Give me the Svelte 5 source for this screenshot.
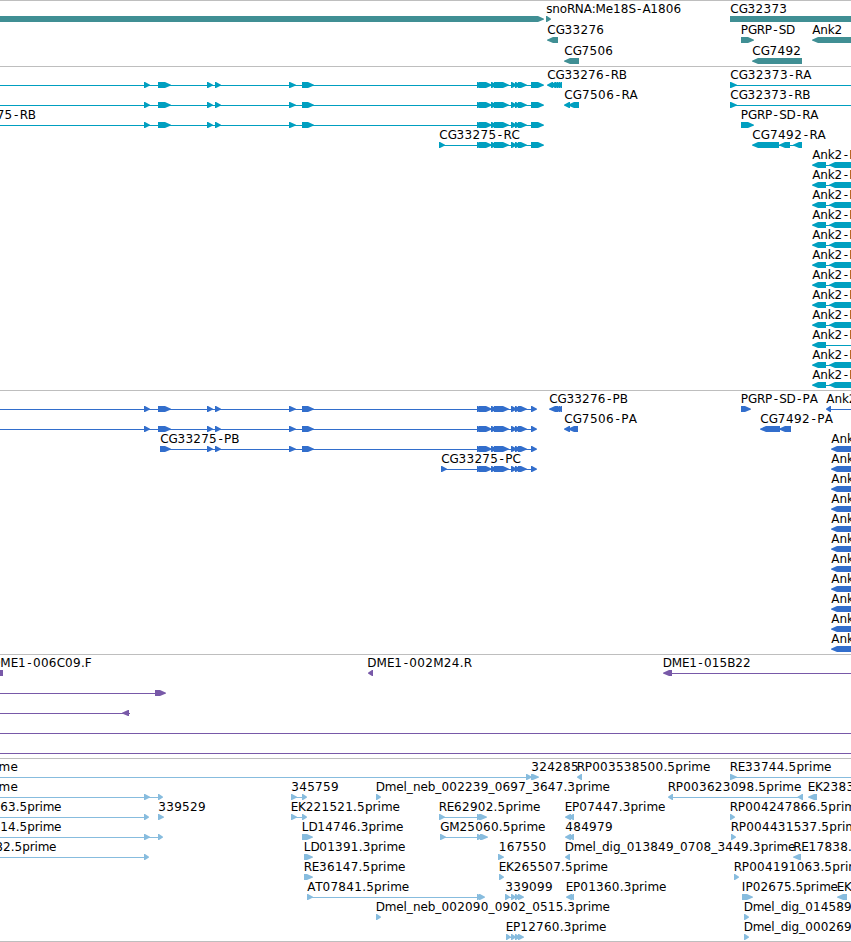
<script lang="ts">
  type Span = [number, number];
  type Dir = 'left' | 'right';
  type Feature = {
    spans?: Span[];
    dir?: Dir;
    line?: Span;
    label?: string;
    x?: number;
    w?: number;
  };
  type Track = { name: string; rowHeight: number; rows: Feature[][] };

  const EDGE = 900;

  // relative glyph advances, used to spread the characters over a label's width
  const advances: Record<string, number> = {
    C: 8.3, G: 8.9, R: 8, P: 7.3, A: 8, B: 8, S: 7.3, D: 9, M: 10.4, N: 9.2, E: 7.3, K: 7.6,
    L: 6.6, T: 7, I: 3.8, F: 7, J: 4, '-': 7, '.': 3.9, ':': 4, _: 6.2, n: 7.5, k: 6.6,
    s: 6.2, o: 7.4, e: 7.4, p: 7.6, r: 5, i: 3.4, m: 11.5, l: 3.4, b: 7.6, d: 7.6, g: 7.6
  };

  function charPositions(label: string, x: number, w: number) {
    const chars = [...label];
    const sizes = chars.map((c) => advances[c] ?? 7.9);
    const scale = w / sizes.reduce((a, b) => a + b, 0);
    let at = x + 0.3;
    return chars.map((c, i) => {
      // centre the narrow hyphen in its cell
      const pos = c === '-' ? at + 1.4 : at;
      at += sizes[i] * scale;
      return pos.toFixed(2);
    }).join(' ');
  }

  function arrow([a, b]: Span, dir: Dir = 'right') {
    const head = Math.min(b - a, 7);
    return dir === 'right'
      ? `${a},15 ${b - head + 1},15 ${b},17.8 ${b},18.4 ${b - head + 1},21 ${a},21`
      : `${b},15 ${a + head - 1},15 ${a},17.8 ${a},18.4 ${a + head - 1},21 ${b},21`;
  }

  const text = (label: string, x: number, w: number, spans: Span[] = [], dir: Dir = 'right', line?: Span): Feature =>
    ({ label, x, w, spans, dir, line });

  const first: Span[] = [[144, 150], [158, 171]];
  const early: Span[] = [[207, 213], [215, 221], [289, 296], [302, 314]];
  const late: Span[] = [[477, 483], [479, 492], [491, 497], [494, 509], [511, 517], [515, 521], [518, 527]];

  const mrna: Feature = { spans: [...first, ...early, ...late, [531, 544]], line: [0, 540] };
  const protein: Feature = { spans: [...first, ...early, ...late, [531, 537]], line: [0, 536] };

  const genes: Feature[][] = [
    [
      { spans: [[0, 544]] },
      text('snoRNA:Me18S-A1806', 546, 135, [[546, 551]]),
      text('CG32373', 730, 57, [[730, EDGE]])
    ],
    [
      text('CG33276', 547, 57, [[547, 558]], 'left'),
      text('PGRP-SD', 740.5, 54, [[741, 754]]),
      text('Ank2', 812, 30, [[812, EDGE]], 'left')
    ],
    [
      text('CG7506', 564, 49, [[564, 579]], 'left'),
      text('CG7492', 752, 49, [[752, 802]], 'left')
    ]
  ];

  const transcripts: Feature[][] = [
    [
      mrna,
      text('CG33276-RB', 547, 79.5, [[547, 553], [550, 556], [553, 558], [555, 560], [557, 562]], 'left'),
      text('CG32373-RA', 730, 81, [[730, 737]], 'right', [730, EDGE])
    ],
    [
      mrna,
      text('CG7506-RA', 564, 73.5, [[564, 570], [568, 579]], 'left'),
      text('CG32373-RB', 730, 80, [[730, 737]], 'right', [730, EDGE])
    ],
    [
      { ...mrna, label: 'CG33275-RB', x: -45, w: 80.5 },
      text('PGRP-SD-RA', 740.5, 77.5, [[741, 754]])
    ],
    [
      text('CG33275-RC', 439, 80.5, [[439, 445], ...late, [531, 544]], 'right', [439, 540]),
      text('CG7492-RA', 752, 73.5, [[752, 779], [779, 790], [793, 802]], 'left', [755, 802])
    ],
    ...Array.from({ length: 12 }, (_, i) => [
      text('Ank2-R', 812, 45, i === 9 ? [[812, 826]] : [[812, 826], [829, EDGE]], 'left', [815, EDGE])
    ])
  ];

  const ankProtein = text('Ank2-P', 831, 45, [[831, EDGE]], 'left');

  const proteins: Feature[][] = [
    [
      protein,
      text('CG33276-PB', 549, 78.5, [[549, 557], [553, 558], [555, 560], [557, 562]], 'left'),
      text('PGRP-SD-PA', 740.5, 77, [[741, 751]]),
      text('Ank2-P', 826, 45, [[826, 831]], 'left', [828, EDGE])
    ],
    [
      protein,
      text('CG7506-PA', 564, 72.5, [[564, 570], [568, 578]], 'left'),
      text('CG7492-PA', 760, 72.5, [[760, 780], [779, 791]], 'left')
    ],
    [
      text('CG33275-PB', 160, 79, [[160, 171], ...early, ...late, [531, 537]], 'right', [160, 536]),
      ankProtein
    ],
    [
      text('CG33275-PC', 441, 79.5, [[441, 447], ...late, [531, 537]], 'right', [441, 536]),
      ankProtein
    ],
    ...Array.from({ length: 9 }, () => [ankProtein])
  ];

  const clones: Feature[][] = [
    [
      text('DME1-006C09.F', -9, 100.5, [[-10, 3]], 'left'),
      text('DME1-002M24.R', 367, 104.5, [[368, 373]], 'left'),
      text('DME1-015B22', 662.5, 88, [[663, 672]], 'left', [668, EDGE])
    ],
    [{ spans: [[155, 166]], line: [0, 158] }],
    [{ spans: [[122, 129]], dir: 'left', line: [0, 130] }],
    [{ line: [0, EDGE] }],
    [{ line: [0, EDGE] }]
  ];

  const ests: Feature[][] = [
    [
      text('prime', -18.5, 36.5, [[526, 532], [531, 539]], 'right', [0, 528]),
      text('324285', 531, 47.5),
      text('RP003538500.5prime', 576.5, 133.5, [[577, 582]], 'left'),
      text('RE33744.5prime', 729.5, 101.5, [[730, 737]], 'right', [730, EDGE])
    ],
    [
      text('prime', -18.5, 36.5, [[144, 150], [158, 163]], 'right', [0, 160]),
      text('345759', 291, 47.5, [[291, 297], [302, 307]], 'right', [291, 305]),
      text('Dmel_neb_002239_0697_3647.3prime', 375.5, 234, [[376, 381]]),
      text('RP003623098.5prime', 667.5, 133.5, [[668, 673], [797.5, 803]], 'left', [670, 800]),
      text('EK2383', 807.5, 46.5, [[808, 817]], 'left')
    ],
    [
      text('63.5prime', 0, 61, [[144, 149]], 'right', [0, 147]),
      text('339529', 158, 47.5, [[158, 164]]),
      text('EK221521.5prime', 290.5, 109, [[291, 297], [302, 307]], 'right', [291, 305]),
      text('RE62902.5prime', 438.5, 101.5, [[439, 445], [477, 483], [479, 487]], 'right', [439, 485]),
      text('EP07447.3prime', 564.5, 100.5, [[565, 571], [568, 574]], 'left'),
      text('RP004247866.5prime', 729.5, 133.5, [[730, 735]])
    ],
    [
      text('14.5prime', 0, 61, [[144, 150], [158, 163]], 'right', [0, 160]),
      text('LD14746.3prime', 301.5, 101.5, [[302, 313]]),
      text('GM25060.5prime', 440, 105, [[440, 446], [477, 483], [480, 488]], 'right', [440, 485]),
      text('484979', 565, 47.5, [[565, 571], [568, 574]], 'left'),
      text('RP004431537.5prime', 730.5, 133.5, [[731, 736]])
    ],
    [
      text('82.5prime', -5, 61, [[144, 149]], 'right', [0, 147]),
      text('LD01391.3prime', 303.5, 101.5, [[304, 313]]),
      text('167550', 498.5, 47.5, [[498, 504]]),
      text('Dmel_dig_013849_0708_3449.3prime', 564.5, 230.5, [[565, 570]], 'left'),
      text('RE17838.5prime', 793, 101.5, [[793, 801]], 'left')
    ],
    [
      text('RE36147.5prime', 303.5, 101.5, [[304, 313]]),
      text('EK265507.5prime', 498.5, 109, [[499, 504]]),
      text('RP004191063.5prime', 733.5, 133.5, [[734, 739]])
    ],
    [
      text('AT07841.5prime', 307, 102, [[307, 313], [477, 482], [479, 485]], 'right', [307, 483]),
      text('339099', 505, 47.5, [[505, 510], [511, 516], [515, 520], [518, 524]], 'right', [505, 522]),
      text('EP01360.3prime', 565.5, 100.5, [[566, 572], [569, 574]], 'left'),
      text('IP02675.5prime', 741.5, 96, [[742, 753]]),
      text('EK', 836.5, 14.5, [[837, 847]], 'left')
    ],
    [
      text('Dmel_neb_002090_0902_0515.3prime', 375.5, 234, [[376, 381]]),
      text('Dmel_dig_014589', 743.5, 108, [[744, 749]])
    ],
    [
      text('EP12760.3prime', 505.5, 100.5, [[506, 511], [511, 516], [515, 520], [518, 524]], 'right', [506, 522]),
      text('Dmel_dig_000269', 743.5, 108, [[744, 749]])
    ]
  ];

  const tracks: Track[] = [
    { name: 'gene', rowHeight: 21, rows: genes },
    { name: 'mrna', rowHeight: 20, rows: transcripts },
    { name: 'protein', rowHeight: 20, rows: proteins },
    { name: 'clone', rowHeight: 20, rows: clones },
    { name: 'est', rowHeight: 20, rows: ests }
  ];
</script>

<main class="browser">
  {#each tracks as track}
    <section class="track {track.name}">
      {#each track.rows as row}
        <svg class="row" width="851" height={track.rowHeight}>
          {#each row as f}
            {#if f.line}
              <rect x={f.line[0]} y="18" width={f.line[1] - f.line[0]} height="1" />
            {/if}
            {#each f.spans ?? [] as span}
              <polygon points={arrow(span, f.dir)} />
            {/each}
            {#if f.label}
              <text x={charPositions(f.label, f.x ?? 0, f.w ?? 0)} y="12">{f.label}</text>
            {/if}
          {/each}
        </svg>
      {/each}
    </section>
  {/each}
</main>

<style>
  :global(body) {
    margin: 0;
    background: #fff;
  }

  .browser {
    width: 851px;
    height: 942px;
    box-sizing: border-box;
    overflow: hidden;
    background: #fff;
    border-bottom: 1px solid #bebebe;
  }

  .track {
    border-top: 1px solid #bebebe;
    padding-bottom: 3px;
  }

  .row {
    display: block;
    overflow: visible;
  }

  .row text {
    font-family: 'DejaVu Sans', sans-serif;
    font-size: 12px;
    fill: #000;
  }

  .gene { fill: #408f94; padding-bottom: 2px; }
  .mrna { fill: #009fc0; }
  .protein { fill: #326ecc; }
  .clone { fill: #7859a8; }
  .est { fill: #87bcde; padding-bottom: 2px; }
</style>
